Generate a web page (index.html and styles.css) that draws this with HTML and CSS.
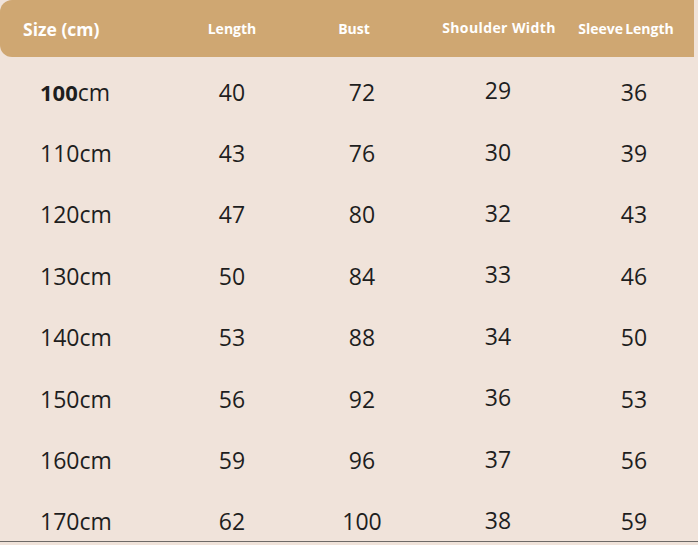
FILE: index.html
```html
<!DOCTYPE html>
<html>
<head>
<meta charset="utf-8">
<link rel="stylesheet" href="styles.css">
</head>
<body>
<div class="chart">
  <div class="head">
    <div class="hc h-size">Size (cm)</div>
    <div class="hc">Length</div>
    <div class="hc">Bust</div>
    <div class="hc h-sw">Shoulder Width</div>
    <div class="hc h-sl">Sleeve Length</div>
  </div>
  <div class="rows">
    <div class="row"><div class="c size"><b>100</b>cm</div><div class="c">40</div><div class="c">72</div><div class="c up">29</div><div class="c">36</div></div>
    <div class="row"><div class="c size">110cm</div><div class="c">43</div><div class="c">76</div><div class="c up">30</div><div class="c">39</div></div>
    <div class="row"><div class="c size">120cm</div><div class="c">47</div><div class="c">80</div><div class="c up">32</div><div class="c">43</div></div>
    <div class="row"><div class="c size">130cm</div><div class="c">50</div><div class="c">84</div><div class="c up">33</div><div class="c">46</div></div>
    <div class="row"><div class="c size">140cm</div><div class="c">53</div><div class="c">88</div><div class="c up">34</div><div class="c">50</div></div>
    <div class="row"><div class="c size">150cm</div><div class="c">56</div><div class="c">92</div><div class="c up">36</div><div class="c">53</div></div>
    <div class="row"><div class="c size">160cm</div><div class="c">59</div><div class="c">96</div><div class="c up">37</div><div class="c">56</div></div>
    <div class="row"><div class="c size">170cm</div><div class="c">62</div><div class="c">100</div><div class="c up">38</div><div class="c">59</div></div>
  </div>
</div>
</body>
</html>
```
FILE: styles.css
```css
html, body {
  margin: 0;
  padding: 0;
  background: #f0e3da;
}
body {
  width: 698px;
  height: 545px;
  overflow: hidden;
  font-family: "Open Sans", "Liberation Sans", sans-serif;
}
.chart {
  height: 542px;
  overflow: hidden;
  border-bottom: 1px solid #6e6a67;
  box-sizing: border-box;
}
.head {
  width: 694px;
  height: 57px;
  background: #cfa772;
  border-radius: 12px 0 0 12px;
  display: grid;
  grid-template-columns: 166px 132px 112px 178px 76px;
  color: #fff;
  font-weight: 700;
  font-size: 14px;
}
.hc {
  display: flex;
  align-items: center;
  justify-content: center;
  white-space: nowrap;
  padding-bottom: 1px;
}
.h-size {
  justify-content: flex-start;
  padding-left: 23px;
  font-size: 17.5px;
  padding-top: 1px;
}
.h-sw {
  letter-spacing: 0.4px;
  padding-bottom: 3px;
}
.h-sl {
  word-spacing: -1.5px;
}
.rows {
  padding-top: 4px;
}
.row {
  height: 61.4px;
  display: grid;
  grid-template-columns: 166px 132px 128px 144px 128px;
  color: #1e1e1e;
  font-size: 23px;
}
.c {
  display: flex;
  align-items: center;
  justify-content: center;
  white-space: nowrap;
}
.c.size {
  justify-content: flex-start;
  padding-left: 40px;
}
.c.size b {
  font-weight: 700;
  font-size: 22px;
}
.c.up {
  padding-bottom: 3px;
}
```
